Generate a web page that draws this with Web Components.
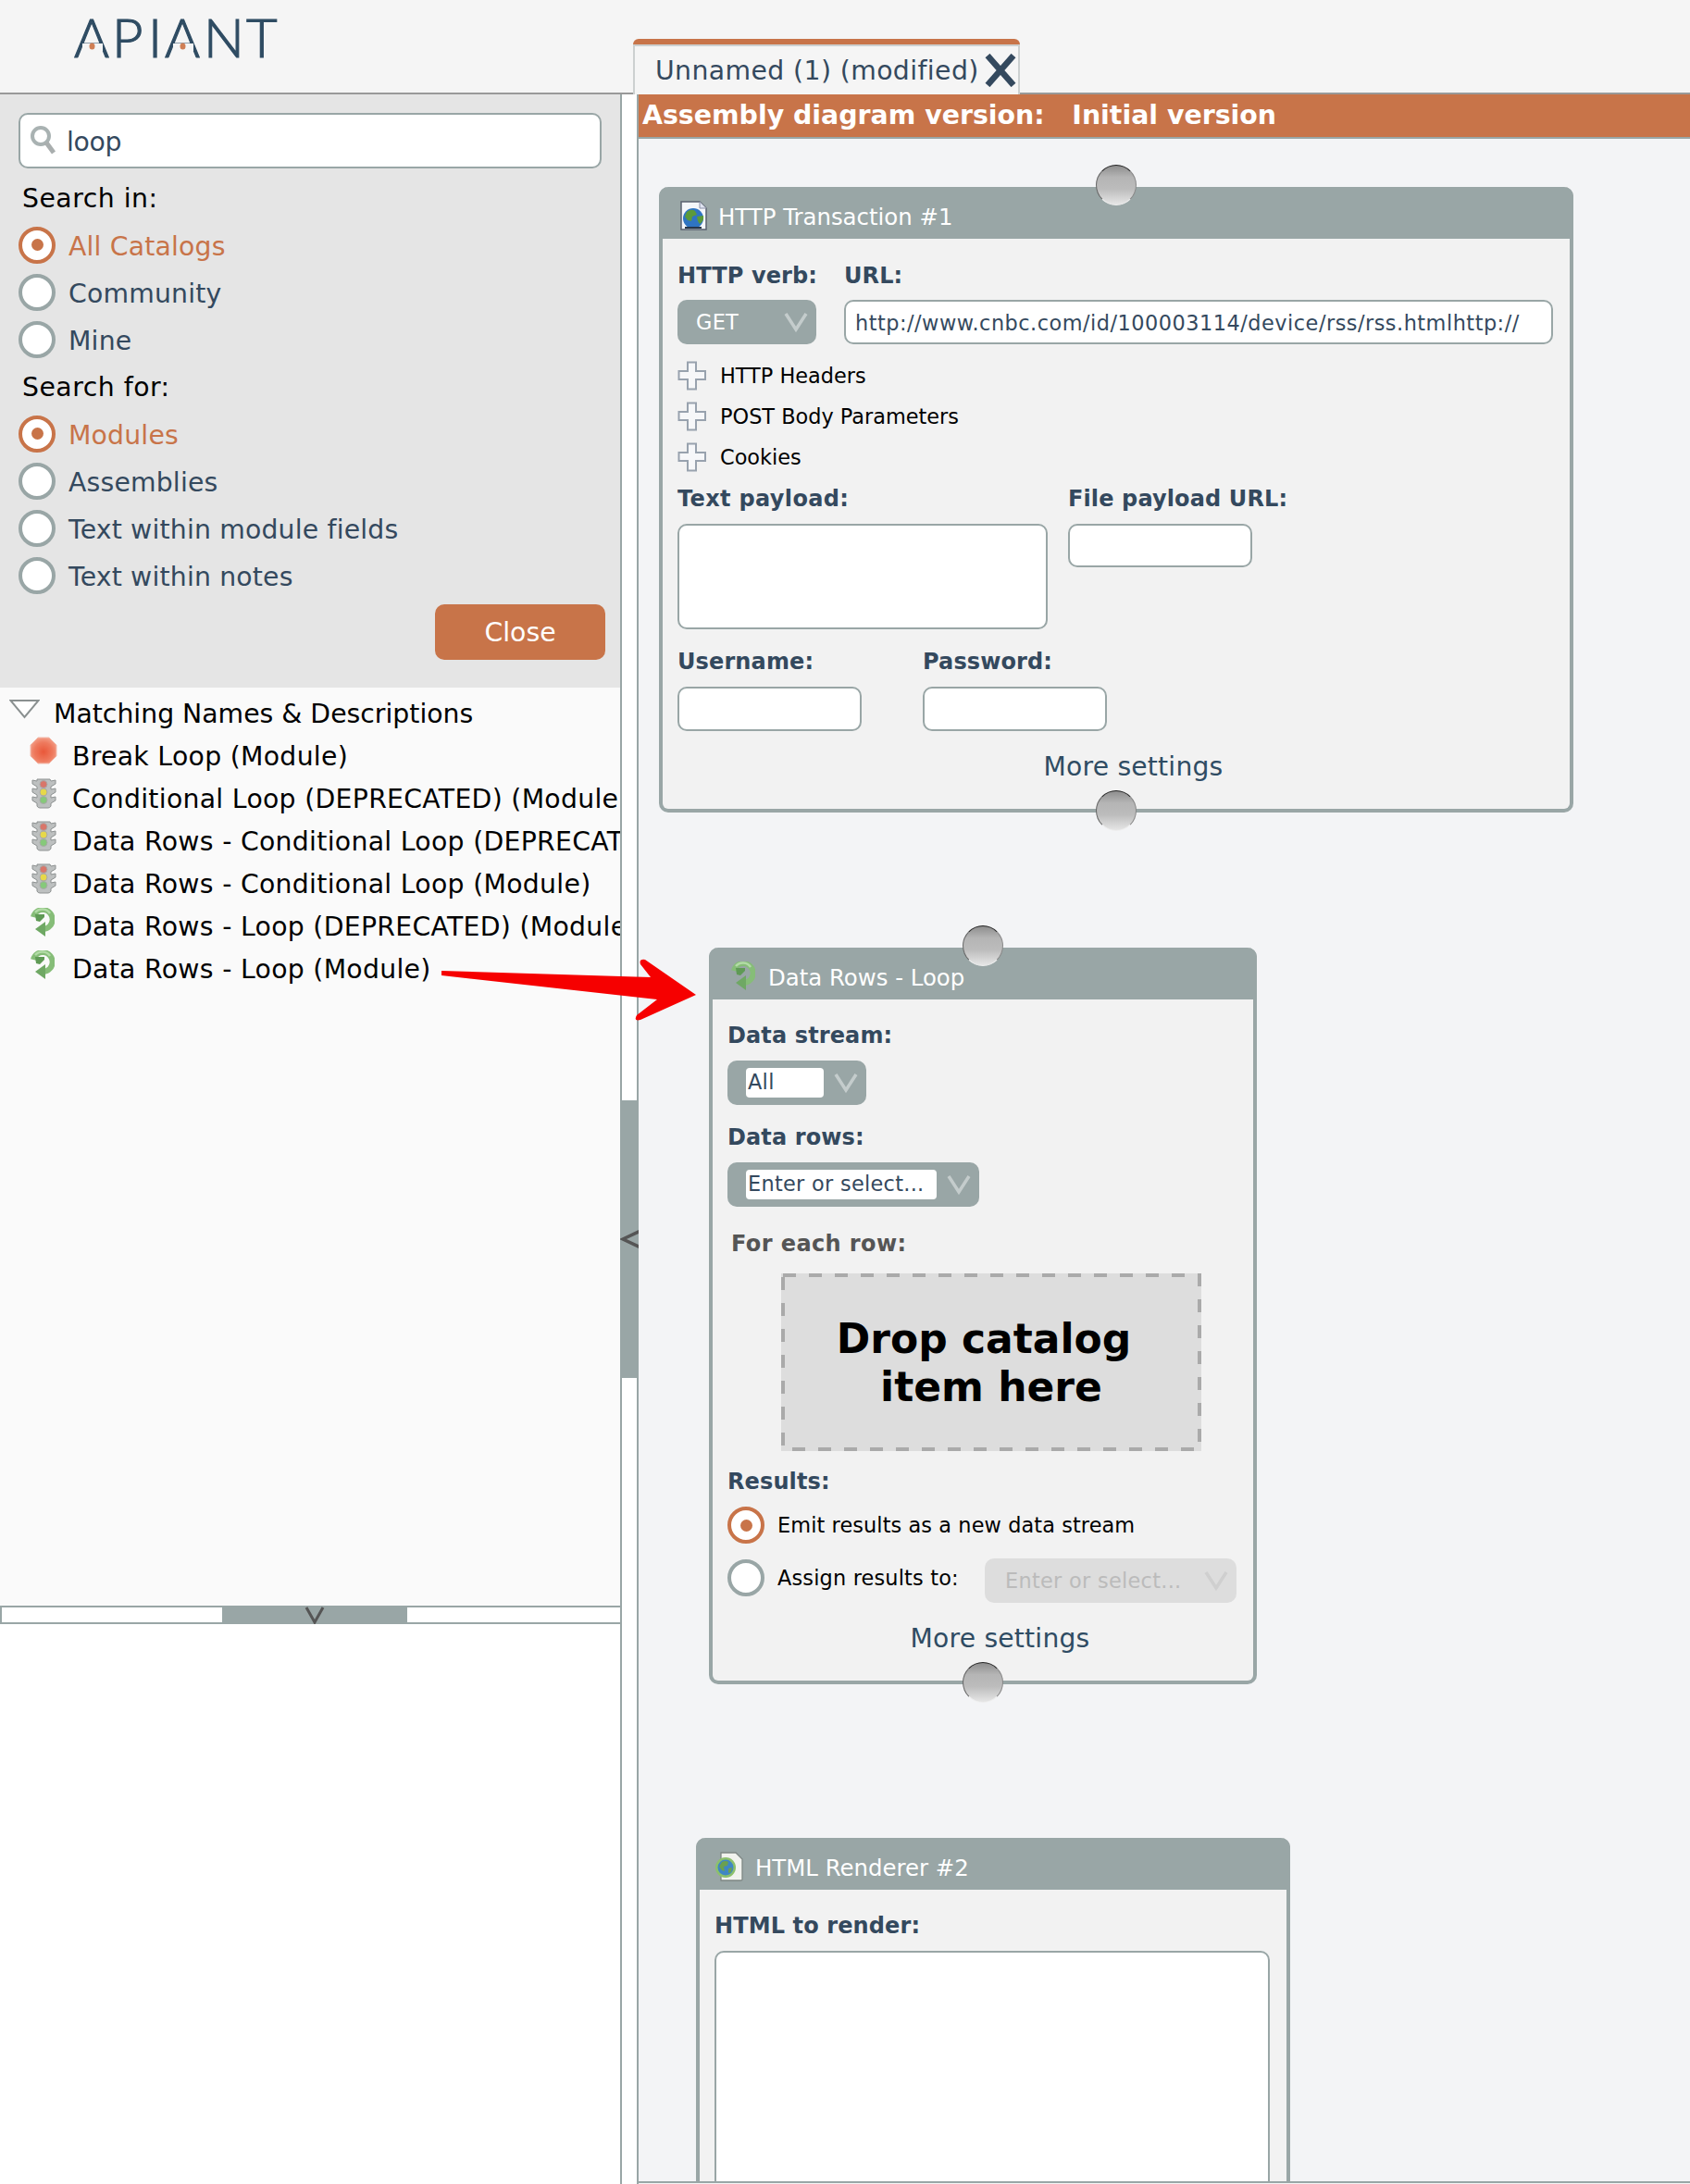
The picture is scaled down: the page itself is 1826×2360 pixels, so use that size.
<!DOCTYPE html>
<html>
<head>
<meta charset="utf-8">
<title>APIANT</title>
<style>
    html, body { margin: 0; padding: 0; }
    body {
        width: 1826px;
        height: 2360px;
        overflow: hidden;
        position: relative;
        background: #f5f5f5;
        font-family: "DejaVu Sans", sans-serif;
        color: #34495e;
    }
</style>
</head>
<body>
<app-header></app-header>
<main-row>
    <side-column slot="left">
        <search-panel></search-panel>
        <result-tree heading="Matching Names &amp; Descriptions">
            <tree-item icon="stop" style="--icon-top:2px">Break Loop (Module)</tree-item>
            <tree-item icon="traffic">Conditional Loop (DEPRECATED) (Module)</tree-item>
            <tree-item icon="traffic">Data Rows - Conditional Loop (DEPRECATED) (Module)</tree-item>
            <tree-item icon="traffic">Data Rows - Conditional Loop (Module)</tree-item>
            <tree-item icon="loop" style="--icon-top:3px">Data Rows - Loop (DEPRECATED) (Module)</tree-item>
            <tree-item icon="loop" style="--icon-top:3px">Data Rows - Loop (Module)</tree-item>
        </result-tree>
        <row-splitter></row-splitter>
    </side-column>
    <column-splitter slot="split"></column-splitter>
    <diagram-pane slot="right">
        <module-node title="HTTP Transaction #1" icon="globedoc" pad="16" style="left:22px;top:52px;width:988px;height:676px">
            <node-port style="left:472px;top:-24px"></node-port>
            <node-port style="left:472px;top:652px"></node-port>
            <form-row style="margin-top:24px">
                <field-label style="width:180px">HTTP verb:</field-label>
                <field-label>URL:</field-label>
            </form-row>
            <form-row style="margin-top:12px">
                <combo-box kind="plain" value="GET" style="width:150px;margin-right:30px"></combo-box>
                <text-box value="http://www.cnbc.com/id/100003114/device/rss/rss.htmlhttp://" style="width:766px;height:48px;letter-spacing:.5px"></text-box>
            </form-row>
            <expand-row style="margin-top:12px">HTTP Headers</expand-row>
            <expand-row>POST Body Parameters</expand-row>
            <expand-row>Cookies</expand-row>
            <form-row style="margin-top:7px">
                <field-label style="width:422px;letter-spacing:.35px">Text payload:</field-label>
                <field-label>File payload URL:</field-label>
            </form-row>
            <form-row style="margin-top:13px">
                <text-box style="width:400px;height:114px;margin-right:22px"></text-box>
                <text-box style="width:199px;height:47px"></text-box>
            </form-row>
            <form-row style="margin-top:19px">
                <field-label style="width:265px">Username:</field-label>
                <field-label>Password:</field-label>
            </form-row>
            <form-row style="margin-top:13px">
                <text-box style="width:199px;height:48px;margin-right:66px"></text-box>
                <text-box style="width:199px;height:48px"></text-box>
            </form-row>
            <more-link style="margin-top:23px">More settings</more-link>
        </module-node>

        <module-node title="Data Rows - Loop" icon="loop" pad="16" style="left:76px;top:874px;width:592px;height:796px">
            <node-port style="left:274px;top:-24px"></node-port>
            <node-port style="left:274px;top:772px"></node-port>
            <field-label style="margin-top:23px">Data stream:</field-label>
            <combo-box kind="input" value="All" style="width:150px;margin-top:13px"></combo-box>
            <field-label style="margin-top:19px">Data rows:</field-label>
            <combo-box kind="input" value="Enter or select..." style="width:272px;margin-top:13px"></combo-box>
            <field-label style="margin:24px 0 0 4px;color:#555;letter-spacing:.4px">For each row:</field-label>
            <drop-zone style="margin:18px 0 0 58px">Drop catalog<br><span style="padding-left:16px">item here</span></drop-zone>
            <field-label style="margin-top:17px">Results:</field-label>
            <radio-option checked plain style="height:40px;margin-top:13px;letter-spacing:.1px">Emit results as a new data stream</radio-option>
            <form-row style="margin-top:16px">
                <radio-option plain style="height:40px;width:278px;margin-top:1px">Assign results to:</radio-option>
                <combo-box kind="disabled" value="Enter or select..." style="width:272px"></combo-box>
            </form-row>
            <more-link style="margin-top:23px">More settings</more-link>
        </module-node>

        <module-node title="HTML Renderer #2" icon="htmldoc" pad="16" style="--icon-left:-3px;left:62px;top:1836px;width:642px;height:540px">
            <field-label style="margin-top:23px">HTML to render:</field-label>
            <text-box style="width:600px;height:400px;margin-top:13px"></text-box>
        </module-node>
    </diagram-pane>
</main-row>
<red-arrow></red-arrow>

<script>
const GREY = '#99a6a6';
const ORANGE = '#c87449';
const NAVY = '#34495e';

function shadow(el, html) {
    el.attachShadow({ mode: 'open' });
    el.shadowRoot.innerHTML = html;
}

const ICONS = {
    stop: `<svg width="30" height="30" viewBox="0 0 30 30">
        <defs><radialGradient id="s" cx="50%" cy="55%" r="60%"><stop offset="0" stop-color="#e9583a"/><stop offset=".6" stop-color="#ee7a5e"/><stop offset="1" stop-color="#f4a48e"/></radialGradient></defs>
        <polygon points="9,1 21,1 29,9 29,21 21,29 9,29 1,21 1,9" fill="url(#s)" stroke="#f3bcae" stroke-width="1"/></svg>`,
    traffic: `<svg width="30" height="34" viewBox="0 0 30 34">
        <path d="M8 2h14l1 2 5-1v4l-5 3v3l5-1v4l-5 3v3l5-1v4l-5 3v3q-1 2-3 2H11q-2 0-3-2v-3l-5-3v-4l5 1v-3l-5-3v-4l5 1v-3L3 7V3l5 1z" fill="#bdc0c0" stroke="#8e9292" stroke-width="1"/>
        <circle cx="15" cy="7.5" r="4" fill="#d8766a" stroke="#a9a9a9"/>
        <circle cx="15" cy="16" r="4" fill="#e6d84a" stroke="#a9a9a9"/>
        <circle cx="15" cy="24.5" r="4" fill="#86c97a" stroke="#a9a9a9"/></svg>`,
    loop: `<svg width="27" height="31" viewBox="0 0 27 31">
        <path d="M4 10A10.5 10.5 0 1 1 15 23" fill="none" stroke="#86bd78" stroke-width="6"/>
        <path d="M6 5A10 10 0 0 1 22 6" fill="none" stroke="#b2dba6" stroke-width="2.5"/>
        <polygon points="17,15 17,31 6,23" fill="#6fa864"/>
        <polygon points="6,7 16,7 16,10 11,15 7,14" fill="#5f9a55"/></svg>`,
    globedoc: `<svg width="29" height="32" viewBox="0 0 29 32">
        <path d="M1 1h20l7 7v23H1z" fill="#f4f6fa" stroke="#5a6270" stroke-width="1.5"/>
        <path d="M21 1v7h7" fill="#dfe3f0" stroke="#8b90a8"/>
        <circle cx="14" cy="19" r="11" fill="#2f74c2"/>
        <path d="M7 12q5-4 9-1l2 4-5 2-1 5-4-1-3-4zM18 17l7-1q1 6-4 9l-2-3z" fill="#5c9a3a"/>
        <path d="M5 28h18v2H5z" fill="#27364a"/></svg>`,
    htmldoc: `<svg width="31" height="32" viewBox="0 0 31 32">
        <path d="M7 1h16l7 7v22q0 1-2 1H7z" fill="#f1f2ee" stroke="#7e8784" stroke-width="1.3"/>
        <circle cx="12" cy="17" r="11" fill="#8cc06c"/>
        <circle cx="12" cy="17" r="8.5" fill="#3f86c4"/>
        <path d="M8 11q4-2 7 0l-1 4-4 1 1 5-3-1-3-4zM15 18l4-1-1 5-3 1z" fill="#6aa050"/></svg>`
};

class AppIcon extends HTMLElement {
    connectedCallback() {
        shadow(this, `<style>:host{display:inline-flex;line-height:0;filter:blur(.35px)}</style>${ICONS[this.getAttribute('name')]}`);
    }
}

class AppHeader extends HTMLElement {
    constructor() {
        super();
        shadow(this, `
            <style>
                :host { display: block; position: relative; height: 100px; border-bottom: 2px solid #999; background: #f5f5f5; box-sizing: content-box; }
                .logo { position: absolute; left: 78px; top: 14px; overflow: visible; }
                .tab {
                    position: absolute; left: 684px; top: 42px; width: 418px; height: 60px;
                    box-sizing: border-box; background: #f5f5f5;
                    border-top: 6px solid ${ORANGE}; border-radius: 6px 6px 0 0;
                }
                .inner {
                    height: 100%; box-sizing: border-box; padding-left: 22px;
                    border: 2px solid #ccd0d0; border-bottom: 0;
                    display: flex; align-items: center;
                    font-size: 28.3px; letter-spacing: .4px; color: ${NAVY}; white-space: nowrap;
                }
                svg.x { position: absolute; left: 380px; top: 10px; }
            </style>
            <svg class="logo" width="230" height="60" viewBox="0 0 230 60">
                <text y="48" x="2 43 82 100 142 188" font-family="Lato, sans-serif" font-size="58" font-weight="300" fill="#2f4c63" stroke="#2f4c63" stroke-width="1.2">APIANT</text>
                <rect x="11" y="33" width="22" height="8" fill="#f5f5f5"/>
                <rect x="109" y="33" width="22" height="8" fill="#f5f5f5"/>
                <ellipse cx="21.5" cy="36" rx="3" ry="3.5" fill="#d07f55"/>
                <ellipse cx="119.5" cy="36" rx="3" ry="3.5" fill="#d07f55"/>
            </svg>
            <div class="tab">
                <div class="inner">Unnamed (1) (modified)</div>
                <svg class="x" width="34" height="36" viewBox="0 0 34 36"><path d="M3 2l28 32M31 2L3 34" stroke="${NAVY}" stroke-width="6.5" fill="none"/></svg>
            </div>`);
    }
}

class MainRow extends HTMLElement {
    constructor() {
        super();
        shadow(this, `
            <style>:host { display: flex; height: 2258px; }</style>
            <slot name="left"></slot><slot name="split"></slot><slot name="right"></slot>`);
    }
}

class SideColumn extends HTMLElement {
    constructor() {
        super();
        shadow(this, `
            <style>:host { display: flex; flex-direction: column; width: 670px; height: 100%; background: #fff; }</style>
            <slot></slot>`);
    }
}

class SearchPanel extends HTMLElement {
    constructor() {
        super();
        shadow(this, `
            <style>
                :host { display: block; height: 641px; box-sizing: border-box; background: #e5e5e5; padding: 20px 16px 0 20px; font-size: 28.3px; }
                .search {
                    height: 60px; width: 630px; box-sizing: border-box; background: #fff;
                    border: 2px solid ${GREY}; border-radius: 10px; margin-bottom: 6px;
                    display: flex; align-items: center; padding-left: 10px; color: ${NAVY};
                }
                .search svg { margin-right: 10px; filter: blur(.5px); }
                .search span { letter-spacing: -.3px; padding-top: 2px; }
                h4 { margin: 0; font-weight: 400; font-size: inherit; height: 51px; line-height: 54px; padding-left: 4px; color: #000; letter-spacing: .5px; }
                .close {
                    width: 184px; height: 60px; margin: 6px 0 0 auto; border-radius: 10px;
                    background: ${ORANGE}; color: #fff; display: flex; align-items: center; justify-content: center;
                }
            </style>
            <div class="search">
                <svg width="30" height="34" viewBox="0 0 30 34"><circle cx="12" cy="12" r="9" fill="#fff" stroke="#a9b2b2" stroke-width="4"/><path d="M18 19l8 11" stroke="#a9aeae" stroke-width="5"/></svg>
                <span>loop</span>
            </div>
            <h4>Search in:</h4>
            <radio-option checked>All Catalogs</radio-option>
            <radio-option>Community</radio-option>
            <radio-option>Mine</radio-option>
            <h4>Search for:</h4>
            <radio-option checked>Modules</radio-option>
            <radio-option>Assemblies</radio-option>
            <radio-option>Text within module fields</radio-option>
            <radio-option>Text within notes</radio-option>
            <div class="close">Close</div>`);
    }
}

class RadioOption extends HTMLElement {
    constructor() {
        super();
        shadow(this, `
            <style>
                :host { display: flex; align-items: center; height: 51px; color: ${NAVY}; white-space: nowrap; letter-spacing: .18px; flex: none; }
                :host([checked]) { color: ${ORANGE}; }
                :host([plain]) { color: #000; font-size: 22.4px; }
                .txt { padding-top: 3px; }
                :host([plain]) .txt { padding-top: 0; }
                .dot { width: 40px; height: 40px; box-sizing: border-box; border-radius: 50%; background: #fff; border: 4.5px solid ${GREY}; margin-right: 14px; display: flex; align-items: center; justify-content: center; flex: none; }
                :host([checked]) .dot { border-color: ${ORANGE}; }
                :host([checked]) .dot::after { content: ''; width: 13px; height: 13px; border-radius: 50%; background: ${ORANGE}; }
            </style>
            <span class="dot"></span><span class="txt"><slot></slot></span>`);
    }
}

class ResultTree extends HTMLElement {
    connectedCallback() {
        shadow(this, `
            <style>
                :host { display: block; height: 992px; box-sizing: border-box; padding-top: 5px; background: #fafafa; overflow: hidden; font-size: 28.3px; color: #000; }
                .head { position: relative; height: 46px; line-height: 48px; padding-left: 58px; white-space: nowrap; }
                svg { position: absolute; left: 10px; top: 7px; }
            </style>
            <div class="head">
                <svg width="33" height="22" viewBox="0 0 33 22"><path d="M1.5 2h30L16.5 20z" fill="#fff" stroke="#8a9090" stroke-width="2"/></svg>
                ${this.getAttribute('heading').replace('&', '&amp;')}
            </div>
            <slot></slot>`);
    }
}

class TreeItem extends HTMLElement {
    connectedCallback() {
        shadow(this, `
            <style>
                :host { display: block; position: relative; height: 46px; line-height: 48px; padding-left: 78px; white-space: nowrap; letter-spacing: .3px; }
                app-icon { position: absolute; left: 32px; top: var(--icon-top, 0); }
            </style>
            <app-icon name="${this.getAttribute('icon')}"></app-icon><slot></slot>`);
    }
}

class RowSplitter extends HTMLElement {
    constructor() {
        super();
        shadow(this, `
            <style>
                :host { display: block; position: relative; height: 20px; box-sizing: border-box; background: #fff; border: 2px solid ${GREY}; border-right: 0; }
                .handle { position: absolute; left: 238px; top: -2px; width: 200px; height: 20px; background: ${GREY}; display: flex; justify-content: center; }
            </style>
            <div class="handle"><svg width="22" height="20" viewBox="0 0 22 20"><path d="M2 2l9 16 9-16" fill="none" stroke="#555" stroke-width="3"/></svg></div>`);
    }
}

class ColumnSplitter extends HTMLElement {
    constructor() {
        super();
        shadow(this, `
            <style>
                :host { display: block; position: relative; width: 20px; height: 100%; box-sizing: border-box; background: #fff; border-left: 2px solid ${GREY}; border-right: 2px solid ${GREY}; }
                .handle { position: absolute; left: -2px; top: 1087px; width: 20px; height: 300px; background: ${GREY}; display: flex; align-items: center; overflow: hidden; }
            </style>
            <div class="handle"><svg width="20" height="24" viewBox="0 0 20 24"><path d="M22 3L3 12l19 9" fill="none" stroke="#555" stroke-width="3.5"/></svg></div>`);
    }
}

class DiagramPane extends HTMLElement {
    constructor() {
        super();
        shadow(this, `
            <style>
                :host { display: flex; flex-direction: column; flex: 1; height: 2257px; background: #f3f4f6; }
                .bar {
                    height: 46px; line-height: 46px; padding-left: 4px; background: ${ORANGE}; border-bottom: 2px solid ${GREY};
                    color: #fff; font-weight: 700; font-size: 28.4px; white-space: pre; flex: none;
                }
                .canvas { position: relative; flex: 1; overflow: hidden; border-bottom: 2px solid ${GREY}; }
            </style>
            <div class="bar">Assembly diagram version:   Initial version</div>
            <div class="canvas"><slot></slot></div>`);
    }
}

class ModuleNode extends HTMLElement {
    connectedCallback() {
        const pad = this.getAttribute('pad') || 15;
        shadow(this, `
            <style>
                :host { display: block; position: absolute; box-sizing: border-box; }
                .box { height: 100%; box-sizing: border-box; border: 4px solid ${GREY}; border-top: 0; border-radius: 10px; background: #f2f2f2; }
                .head {
                    height: 56px; box-sizing: border-box; margin: 0 -4px; padding: 8px 0 0 23px; border-radius: 10px 10px 0 0; background: ${GREY}; color: #fff;
                    display: flex; align-items: center; font-size: 24.4px; white-space: nowrap;
                }
                .ic { width: 41px; flex: none; display: flex; margin-top: -3px; }
                app-icon { margin-left: var(--icon-left, 0); }
                .body { padding: 0 0 0 ${pad}px; color: ${NAVY}; }
            </style>
            <div class="box">
                <div class="head"><span class="ic"><app-icon name="${this.getAttribute('icon')}"></app-icon></span>${this.getAttribute('title')}</div>
                <div class="body"><slot></slot></div>
            </div>`);
    }
}

class NodePort extends HTMLElement {
    constructor() {
        super();
        shadow(this, `
            <style>
                :host {
                    position: absolute; width: 44px; height: 44px; z-index: 2; box-sizing: border-box; border-radius: 50%;
                    background: linear-gradient(#8e8e8e 0, #b5b5b5 30%, #bcbcbc 60%, #e6e6e6 100%);
                    border: 1.5px solid transparent; border-top-color: #222; border-left-color: #666; border-right-color: #888; border-bottom-color: #eee;
                }
            </style>`);
    }
}

class FormRow extends HTMLElement {
    constructor() {
        super();
        shadow(this, `<style>:host { display: flex; }</style><slot></slot>`);
    }
}

class FieldLabel extends HTMLElement {
    constructor() {
        super();
        shadow(this, `
            <style>:host { display: block; height: 30px; line-height: 32px; font-size: 24px; font-weight: 700; letter-spacing: .12px; white-space: nowrap; }</style>
            <slot></slot>`);
    }
}

class TextBox extends HTMLElement {
    connectedCallback() {
        shadow(this, `
            <style>
                :host { display: block; box-sizing: border-box; background: #fff; border: 2px solid ${GREY}; border-radius: 10px; color: ${NAVY}; font-size: 22.4px; padding-left: 10px; white-space: nowrap; overflow: hidden; line-height: 46px; flex: none; }
            </style>${this.getAttribute('value') || ''}`);
    }
}

class ComboBox extends HTMLElement {
    connectedCallback() {
        const kind = this.getAttribute('kind');
        shadow(this, `
            <style>
                :host { display: flex; align-items: center; height: 48px; box-sizing: border-box; border-radius: 10px; background: ${GREY}; font-size: 22.4px; letter-spacing: .3px; white-space: nowrap; flex: none; padding-left: 20px; }
                :host([kind=disabled]) { background: #ddd; padding-left: 22px; }
                .val { flex: 1; }
                :host([kind=input]) .val { background: #fff; color: ${NAVY}; height: 32px; line-height: 30px; border-radius: 4px; padding-left: 2px; }
                :host([kind=plain]) .val { color: #fff; }
                :host([kind=disabled]) .val { color: #bbb; }
                svg { flex: none; margin: 0 9px 0 11px; }
            </style>
            <span class="val">${this.getAttribute('value')}</span>
            <svg width="26" height="22" viewBox="0 0 26 22"><path d="M2 2l11 17L24 2" fill="none" stroke="${kind === 'disabled' ? '#cfcfcf' : '#c4cccc'}" stroke-width="3.5"/></svg>`);
    }
}

class ExpandRow extends HTMLElement {
    constructor() {
        super();
        shadow(this, `
            <style>
                :host { display: flex; align-items: center; height: 44px; font-size: 22.4px; color: #000; white-space: nowrap; }
                svg { margin-right: 14px; flex: none; }
            </style>
            <svg width="32" height="32" viewBox="0 0 32 32"><path d="M11 1.5h9v9.5h10v9H20v10.5h-9V20H1.5v-9H11z" fill="#f6f7f9" stroke="#98a2ae" stroke-width="2"/></svg>
            <slot></slot>`);
    }
}

class MoreLink extends HTMLElement {
    constructor() {
        super();
        shadow(this, `
            <style>:host { display: block; height: 30px; line-height: 32px; text-align: center; padding-left: 21px; font-size: 28.2px; letter-spacing: .2px; color: #2f4c63; }</style>
            <slot></slot>`);
    }
}

class DropZone extends HTMLElement {
    constructor() {
        super();
        shadow(this, `
            <style>
                :host { display: flex; position: relative; width: 454px; height: 192px; align-items: center; justify-content: center; background: #ddd; color: #000; font-size: 44px; font-weight: 700; line-height: 52px; text-align: center; padding: 2px 16px 0 0; box-sizing: border-box; }
                svg { position: absolute; left: 0; top: 0; }
            </style>
            <svg width="454" height="192"><rect x="2" y="2" width="450" height="188" fill="none" stroke="#aaa" stroke-width="4" stroke-dasharray="14 14"/></svg>
            <span style="position:relative"><slot></slot></span>`);
    }
}

class RedArrow extends HTMLElement {
    constructor() {
        super();
        shadow(this, `
            <style>:host { position: absolute; left: 470px; top: 1030px; z-index: 5; line-height: 0; }</style>
            <svg width="290" height="80" viewBox="470 1030 290 80">
                <path d="M477 1049L703 1056L692 1042Q690 1036 697 1037L752 1075L692 1102Q684 1104 688 1097L710 1080L477 1054Z" fill="#f60000"/>
            </svg>`);
    }
}

customElements.define('app-icon', AppIcon);
customElements.define('app-header', AppHeader);
customElements.define('main-row', MainRow);
customElements.define('side-column', SideColumn);
customElements.define('search-panel', SearchPanel);
customElements.define('radio-option', RadioOption);
customElements.define('result-tree', ResultTree);
customElements.define('tree-item', TreeItem);
customElements.define('row-splitter', RowSplitter);
customElements.define('column-splitter', ColumnSplitter);
customElements.define('diagram-pane', DiagramPane);
customElements.define('module-node', ModuleNode);
customElements.define('node-port', NodePort);
customElements.define('form-row', FormRow);
customElements.define('field-label', FieldLabel);
customElements.define('text-box', TextBox);
customElements.define('combo-box', ComboBox);
customElements.define('expand-row', ExpandRow);
customElements.define('more-link', MoreLink);
customElements.define('drop-zone', DropZone);
customElements.define('red-arrow', RedArrow);
</script>
</body>
</html>
